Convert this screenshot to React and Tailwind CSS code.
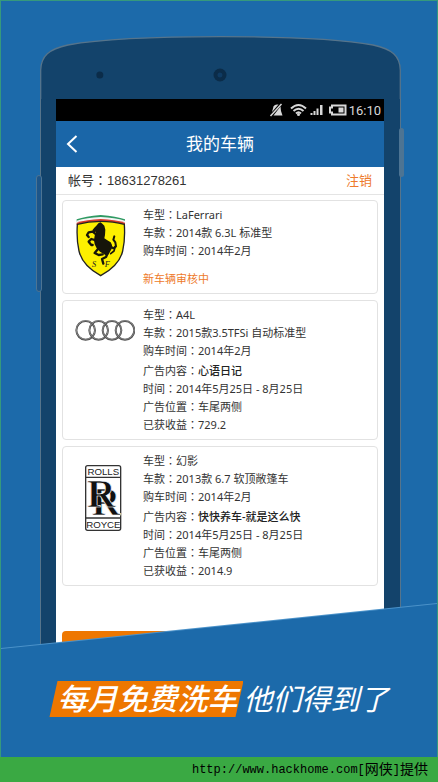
import React from "react";

const colonStyle = "leading-none font-['Noto_Sans_CJK_TC',sans-serif]";

function Field({ label, children, strong }) {
  return (
    <div className="flex">
      <dt className="shrink-0">
        {label}
        <span className={colonStyle}>：</span>
      </dt>
      <dd className={strong ? "font-medium text-[#222]" : ""}>{children}</dd>
    </div>
  );
}

function FerrariLogo() {
  return (
    <svg viewBox="63 39 192 234" className="h-[78px] w-16" aria-hidden="true">
      <path d="M80 73Q105 64 152 60Q200 64 225 73V80Q195 70 152 68Q110 70 80 80Z" fill="#2f9a63" />
      <path d="M80 77Q110 68 152 66Q195 68 225 77V86Q195 76 152 74Q110 76 80 86Z" fill="#f4f4f4" />
      <path d="M80 83Q110 74 152 72Q195 74 225 83V89H80Z" fill="#d8392b" />
      <path d="M82 88Q115 79 152 79Q190 79 223 88Q226 135 218 168Q208 212 152 242Q97 212 87 168Q79 135 82 88Z" fill="#fdf000" stroke="#222" strokeWidth="4" />
      <path d="M146 84L152 82L157 86L163 92L166 104L165 120L163 130L172 136L182 142L186 150L186 160L180 170L176 178L170 182L160 176L150 170L140 160L134 148L132 136L134 122L138 110L132 112L127 106L133 98L139 92Z" fill="#16150a" />
      <g fill="none" stroke="#16150a" strokeLinecap="round" strokeLinejoin="round">
        <path d="M138 118L128 110L116 112L111 120L116 126" strokeWidth="7" />
        <path d="M138 136L124 132L116 140L124 150L128 150" strokeWidth="7" />
        <path d="M144 162L134 174L146 180L158 178" strokeWidth="7" />
        <path d="M174 172L168 186L156 192L160 206" strokeWidth="7" />
        <path d="M182 154L190 160L198 154L196 142L190 134L193 124" strokeWidth="6" />
        <path d="M196 154L192 168L182 176" strokeWidth="5" />
      </g>
      <text x="126" y="217" fontSize="25" fontStyle="italic" fontFamily="Liberation Serif, serif" fill="#222">S</text>
      <text x="164" y="217" fontSize="25" fontStyle="italic" fontFamily="Liberation Serif, serif" fill="#222">F</text>
    </svg>
  );
}

function AudiLogo() {
  return (
    <svg viewBox="63 24 192 234" className="h-[78px] w-16" fill="none" aria-hidden="true">
      {[107, 146, 186, 225].map((cx) => (
        <g key={cx}>
          <circle cx={cx} cy="91" r="28" stroke="#4a4a4a" strokeWidth="6" />
          <circle cx={cx} cy="90" r="28" stroke="#a8a8a8" strokeWidth="2" />
        </g>
      ))}
    </svg>
  );
}

function RollsLogo() {
  return (
    <svg viewBox="63 27 192 234" className="h-[78px] w-16" aria-hidden="true">
      <rect x="107" y="62" width="105" height="194" rx="6" fill="#fff" stroke="#333" strokeWidth="4" />
      <path d="M107 97H212M107 219H212" stroke="#333" strokeWidth="4" />
      <g fontFamily="Liberation Sans, sans-serif" fontSize="29" textAnchor="middle" fill="#222">
        <text x="160" y="91">ROLLS</text>
        <text x="160" y="248">ROYCE</text>
      </g>
      <g fontFamily="Liberation Serif, serif" fontWeight="700" fontSize="118" fill="#111" stroke="#fff" strokeWidth="2">
        <text x="125" y="211">R</text>
        <text x="111" y="187">R</text>
      </g>
    </svg>
  );
}

function Card({ logo, model, style, notice, ad, income }) {
  return (
    <li className="grid grid-cols-[80px_1fr] rounded-sm border border-[#e2e2e2] bg-white py-[5px]">
      <div className="flex h-0 justify-center pt-0.5">{logo}</div>
      <div className="text-[11px] leading-[18px] text-[#333]">
        <dl>
          <Field label="车型">{model}</Field>
          <Field label="车款">{style}</Field>
          <Field label="购车时间">2014年2月</Field>
        </dl>
        {notice && <p className="mt-[10px] text-[#ee7a2b]">{notice}</p>}
        {ad && (
          <dl className="mt-0.5">
            <Field label="广告内容" strong>{ad}</Field>
            <Field label="时间">2014年5月25日 - 8月25日</Field>
            <Field label="广告位置">车尾两侧</Field>
            <Field label="已获收益">{income}</Field>
          </dl>
        )}
      </div>
    </li>
  );
}

function StatusBar() {
  return (
    <div className="flex h-[22px] items-center justify-end bg-black pr-[3px] text-[#d8d8d8]">
      <svg viewBox="0 0 78 24" className="h-6 w-[78px]" fill="currentColor" aria-hidden="true">
        <path d="M3 14L4.500 8.500Q5.500 6.500 8 6.500H9.500L3 14Z" />
        <path d="M11.500 8.500L12 13L13.500 17.500H4.500Z" />
        <path d="M12.500 6L1.500 18" stroke="currentColor" strokeWidth="1.500" />
        <g fill="none" stroke="currentColor" strokeWidth="2">
          <path d="M22 10.500Q29.500 3.500 37 10.500M24.500 13Q29.500 8.500 34.500 13M27 15.500Q29.500 13 32 15.500" />
        </g>
        <circle cx="29.500" cy="16.500" r="1.500" />
        <path d="M41.500 15h2v2h-2zM44.500 13h2v4h-2zM47.500 10.500h2v6.500h-2zM51 7h2.500v10h-2.500z" />
        <path d="M63 7.500H76.500V16.500H63V14.500H61V9.500H63Z" fill="none" stroke="currentColor" strokeWidth="2" />
        <path d="M69.500 9.500h5v5h-5z" />
      </svg>
      <span className="ml-[2px] font-['Roboto',sans-serif] text-[13px] leading-none">16:10</span>
    </div>
  );
}

function Phone() {
  return (
    <div className="relative">
      <span className="absolute -left-1 top-[139px] h-[117px] w-1.5 rounded-sm border border-[#4d7493] bg-[#1d568a]" />
      <span className="absolute -right-[3px] top-[92px] h-[49px] w-[5px] rounded-sm bg-[#4d7493]" />
      <svg viewBox="0 0 362 63" preserveAspectRatio="none" className="block h-[63px] w-full" aria-hidden="true">
        <path d="M.7 64V34C1 20 9 13 28 9C62 3 120 .7 181 .7C242 .7 300 3 334 9C353 13 361 20 361.300 34V64" fill="#13436b" stroke="#56748b" strokeWidth="1.300" />
        <circle cx="60" cy="39" r="3.500" fill="#0b2c49" />
        <circle cx="180.500" cy="39" r="6.500" fill="#0b2c49" />
        <circle cx="180.500" cy="39" r="2.500" fill="#0f3b63" />
      </svg>
      <div className="border-x border-[#56748b] bg-[#13436b] pl-[15px] pr-4">
        <div className="bg-white">
          <StatusBar />
          <header className="grid h-[46px] grid-cols-[1fr_auto_1fr] items-center bg-[#1a66a8] text-white">
            <button type="button" aria-label="返回" className="flex pl-2.5">
              <svg viewBox="0 0 12 18" className="h-[18px] w-3" fill="none" stroke="currentColor" strokeWidth="2">
                <path d="M10.500 1L2 9L10.500 17" />
              </svg>
            </button>
            <h1 className="text-[17px] leading-6">我的车辆</h1>
          </header>
          <div className="flex h-7 items-center justify-between border-b border-[#e4e4e4] px-3 text-[13px]">
            <p className="text-[#333]">
              帐号<span className={colonStyle}>：</span>
              <span className="font-['Liberation_Sans',sans-serif]">18631278261</span>
            </p>
            <button type="button" className="text-[#ee7a2b]">注销</button>
          </div>
          <ul className="flex flex-col gap-1.5 px-1.5 pt-[5px]">
            <Card logo={<FerrariLogo />} model="LaFerrari" style="2014款 6.3L 标准型" notice="新车辆审核中" />
            <Card logo={<AudiLogo />} model="A4L" style="2015款3.5TFSi 自动标准型" ad="心语日记" income="729.2" />
            <Card logo={<RollsLogo />} model="幻影" style="2013款 6.7 软顶敞篷车" ad="快快养车-就是这么快" income="2014.9" />
          </ul>
          <div className="px-1.5 pt-[45px]">
            <button type="button" aria-label="添加车辆" className="block h-5 w-full rounded-t-sm bg-[#ee7700]" />
          </div>
        </div>
      </div>
    </div>
  );
}

export default function App() {
  return (
    <div className="bg-[#3aa943] font-['Noto_Sans','Noto_Sans_CJK_SC',sans-serif]">
      <main className="border-x border-t border-[#36997c] bg-[#1c6aaa] pt-[35px]">
        <div className="pl-[39px] pr-9">
          <Phone />
        </div>
        <section className="relative -mt-12 bg-[#4b92c9] [clip-path:polygon(0_45px,100%_0,100%_100%,0_100%)]">
          <div className="flex h-[154px] items-end bg-[#1c6aaa] pb-10 [clip-path:polygon(0_46px,100%_1px,100%_100%,0_100%)]">
            <h2 className="flex w-full items-center justify-center whitespace-nowrap italic text-white">
              <strong className="bg-[#ee7700] pl-2 pr-1.5 text-[30px] font-medium leading-9 [clip-path:polygon(8px_0,100%_0,calc(100%-8px)_100%,0_100%)]">
                每月免费洗车
              </strong>
              <span className="text-[29px] font-normal leading-9">他们得到了</span>
            </h2>
          </div>
        </section>
      </main>
      <footer className="flex h-[25px] items-center justify-end pr-2.5 text-black">
        <a href="http://www.hackhome.com" className="flex items-center font-['Liberation_Mono','Noto_Sans_CJK_SC',monospace] text-[14px] leading-5">
          <span className="text-[12px]">http://www.hackhome.com[</span>网侠<span className="text-[12px]">]</span>提供
        </a>
      </footer>
    </div>
  );
}
